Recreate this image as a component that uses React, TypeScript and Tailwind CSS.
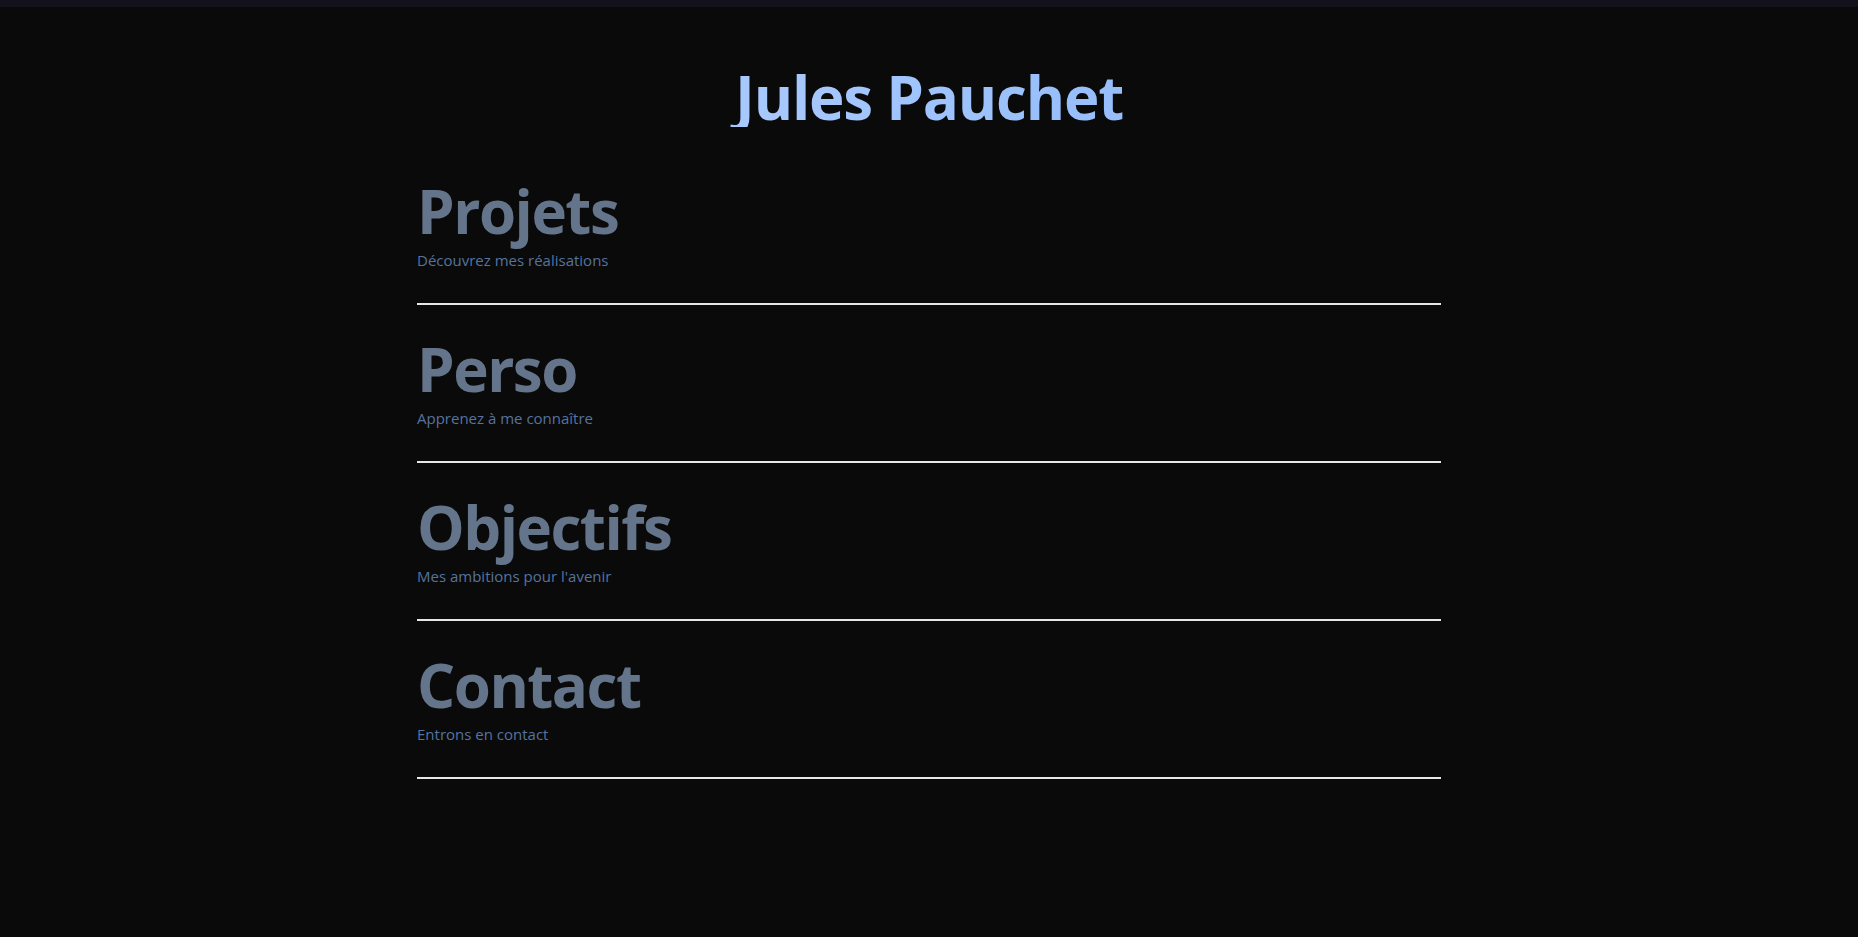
const sections = [
  { title: "Projets", subtitle: "Découvrez mes réalisations" },
  { title: "Perso", subtitle: "Apprenez à me connaître" },
  { title: "Objectifs", subtitle: "Mes ambitions pour l'avenir" },
  { title: "Contact", subtitle: "Entrons en contact" },
];

export default function App() {
  return (
    <div
      className="min-h-screen bg-[#0a0a0a]"
      style={{ fontFamily: '"Open Sans", "Noto Sans", sans-serif' }}
    >
      <div className="h-[7px] bg-[#12111c]" />
      <main className="max-w-5xl mx-auto pt-[60px]">
        <h1 className="text-center text-[60px] leading-none font-bold tracking-[-1.2px] bg-gradient-to-r from-[#b6d2fe] to-[#88b4f9] bg-clip-text text-transparent">
          Jules Pauchet
        </h1>
        <div className="mt-[20px]">
          {sections.map((s) => (
            <section key={s.title} className="pt-[34px] pb-8 border-b-2 border-[#e5e7eb]">
              <h2 className="text-[60px] leading-none font-bold tracking-[-1.5px] text-[#64748b]">
                {s.title}
              </h2>
              <p className="mt-2 text-[15px] leading-[22px] text-[#56739f]">{s.subtitle}</p>
            </section>
          ))}
        </div>
      </main>
    </div>
  );
}
